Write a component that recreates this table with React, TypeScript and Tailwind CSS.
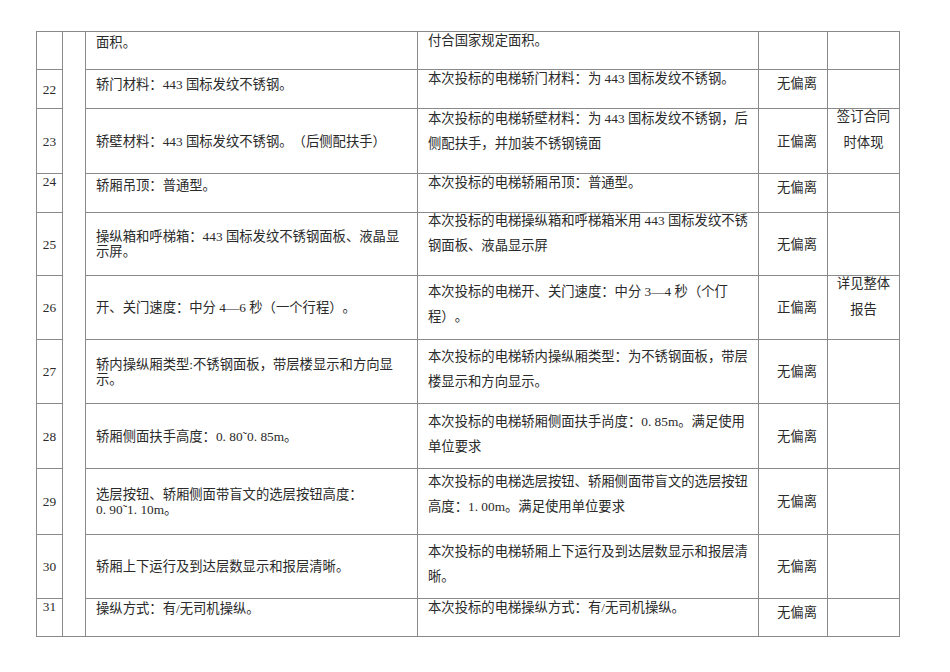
import React from 'react';

type Row = {
    no: string;
    h: number;
    noTop?: boolean;
    left: string[];
    leftPt?: number;
    right: string[];
    rightShift: number;
    result: string;
    resultTop?: boolean;
    note?: string[];
};

const rows: Row[] = [
    { no: '', h: 38, left: ['面积。'], leftPt: 3, right: ['付合国家规定面积。'], rightShift: -4, result: '' },
    { no: '22', h: 39, left: ['轿门材料：443 国标发纹不锈钢。'], leftPt: 7, right: ['本次投标的电梯轿门材料：为 443 国标发纹不锈钢。'], rightShift: -4, result: '无偏离', resultTop: true },
    {
        no: '23', h: 65, left: ['轿壁材料：443 国标发纹不锈钢。（后侧配扶手）'],
        right: ['本次投标的电梯轿壁材料：为 443 国标发纹不锈钢，后', '侧配扶手，并加装不锈钢镜面'], rightShift: -3,
        result: '正偏离', note: ['签订合同', '时体现'],
    },
    { no: '24', h: 39, noTop: true, left: ['轿厢吊顶：普通型。'], leftPt: 4, right: ['本次投标的电梯轿厢吊顶：普通型。'], rightShift: -4, result: '无偏离', resultTop: true },
    {
        no: '25', h: 63, left: ['操纵箱和呼梯箱：443 国标发纹不锈钢面板、液晶显', '示屏。'],
        right: ['本次投标的电梯操纵箱和呼梯箱米用 443 国标发纹不锈', '钢面板、液晶显示屏'], rightShift: -5, result: '无偏离',
    },
    {
        no: '26', h: 64, left: ['开、关门速度：中分 4—6 秒（一个行程）。'],
        right: ['本次投标的电梯开、关门速度：中分 3—4 秒（个仃', '程）。'], rightShift: 3,
        result: '正偏离', note: ['详见整体', '报告'],
    },
    {
        no: '27', h: 64, left: ['轿内操纵厢类型:不锈钢面板，带层楼显示和方向显', '示。'],
        right: ['本次投标的电梯轿内操纵厢类型：为不锈钢面板，带层', '楼显示和方向显示。'], rightShift: 4, result: '无偏离',
    },
    {
        no: '28', h: 65, left: ['轿厢侧面扶手高度：0. 80˜0. 85m。'],
        right: ['本次投标的电梯轿厢侧面扶手尚度：0. 85m。满足使用', '单位要求'], rightShift: 5, result: '无偏离',
    },
    {
        no: '29', h: 66, left: ['选层按钮、轿厢侧面带盲文的选层按钮高度：', '0. 90˜1. 10m。'],
        right: ['本次投标的电梯选层按钮、轿厢侧面带盲文的选层按钮', '高度：1. 00m。满足使用单位要求'], rightShift: 0, result: '无偏离',
    },
    {
        no: '30', h: 64, left: ['轿厢上下运行及到达层数显示和报层清晰。'],
        right: ['本次投标的电梯轿厢上下运行及到达层数显示和报层清', '晰。'], rightShift: 4, result: '无偏离',
    },
    { no: '31', h: 38, noTop: true, left: ['操纵方式：有/无司机操纵。'], leftPt: 2, right: ['本次投标的电梯操纵方式：有/无司机操纵。'], rightShift: -4, result: '无偏离', resultTop: true },
];

const cell = 'border border-[#8a8a8a] p-0';

export default function App() {
    return (
        <div
            className="min-h-[672px] w-[950px] bg-white pt-[31px] pl-[36px] text-[13.33px] text-[#2a2a2a] [text-spacing-trim:space-all]"
            style={{ fontFamily: '"Liberation Serif", "Noto Sans CJK SC", serif' }}
        >
            <table className="table-fixed border-collapse">
                <colgroup>
                    <col className="w-[26px]" />
                    <col className="w-[23px]" />
                    <col className="w-[332px]" />
                    <col className="w-[341px]" />
                    <col className="w-[69px]" />
                    <col className="w-[72px]" />
                </colgroup>
                <tbody>
                    {rows.map((r, i) => (
                        <tr key={i} style={{ height: r.h }}>
                            <td className={`${cell} text-center leading-[15px] ${r.noTop ? 'align-top' : 'align-middle'}`}>
                                {r.no}
                            </td>
                            {i === 0 && <td rowSpan={rows.length} className={cell}></td>}
                            <td
                                className={`${cell} pl-[10px] leading-[15px] whitespace-nowrap ${r.leftPt !== undefined ? 'align-top' : 'align-middle'}`}
                                style={r.leftPt !== undefined ? { paddingTop: r.leftPt } : undefined}
                            >
                                {r.left.map((t, j) => (
                                    <div key={j}>{t}</div>
                                ))}
                            </td>
                            <td className={`${cell} align-top pl-[10px] leading-[25px] whitespace-nowrap`}>
                                <div style={{ marginTop: r.rightShift }}>
                                    {r.right.map((t, j) => (
                                        <div key={j}>{t}</div>
                                    ))}
                                </div>
                            </td>
                            <td className={`${cell} text-center pl-[8px] leading-[15px] ${r.resultTop ? 'align-top pt-[6px]' : 'align-middle'}`}>
                                {r.result}
                            </td>
                            <td className={`${cell} align-top text-center leading-[26px]`}>
                                <div className="-mt-[5px]">
                                    {r.note?.map((t, j) => (
                                        <div key={j}>{t}</div>
                                    ))}
                                </div>
                            </td>
                        </tr>
                    ))}
                </tbody>
            </table>
        </div>
    );
}
